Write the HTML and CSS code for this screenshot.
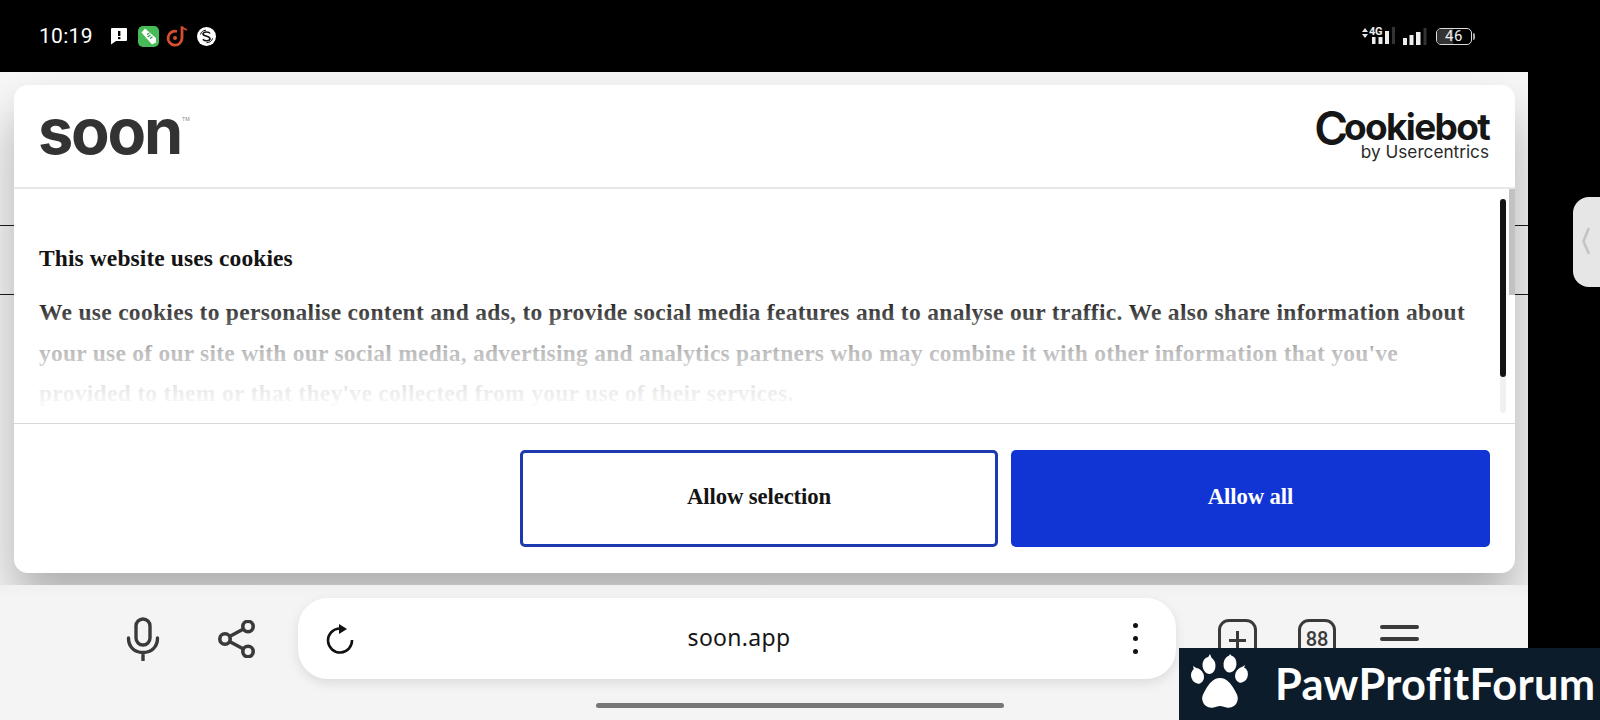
FILE: index.html
```html
<!DOCTYPE html>
<html lang="en">
<head>
<meta charset="utf-8">
<title>soon.app</title>
<link rel="stylesheet" href="styles.css">
</head>
<body>
<header class="status">
  <span class="time">10:19</span>
  <div class="notif">
    <svg class="ic-msg" viewBox="0 0 18 18"><path d="M2 1h14a1 1 0 0 1 1 1v11a1 1 0 0 1-1 1H6l-5 3.500V2a1 1 0 0 1 1-1z" fill="#fff"/><rect x="8" y="4" width="2.400" height="5" fill="#000"/><rect x="8" y="10" width="2.400" height="2.200" fill="#000"/></svg>
    <svg class="ic-app" viewBox="0 0 21 21"><rect width="21" height="21" rx="5" fill="#47bb58"/><path d="M3.500 6.500 7 2.500l11 9.500v4.500l-4 2z" fill="#fff"/><path d="M9 8.500l2.500-1.500M9.500 11l3-2M12 12.500l2.500-1.800" stroke="#2e9a42" stroke-width="1.300" fill="none"/></svg>
    <svg class="ic-note" viewBox="0 0 22 22"><path d="M12 6.500A7 7 0 1 0 17 13V1.500" fill="none" stroke="#d4502f" stroke-width="2.800"/><circle cx="10" cy="13" r="2" fill="#d4502f"/><path d="M16.500 2l5.500 3" stroke="#d4502f" stroke-width="1.500" fill="none"/></svg>
    <svg class="ic-s" viewBox="0 0 19 19"><circle cx="9.500" cy="9.500" r="9.500" fill="#fff"/><path d="M13 6.500C12 4.500 6.500 4.500 6 6.800c-.5 2.400 7 2 7 5 0 2.400-5.500 2.600-7 .4" fill="none" stroke="#111" stroke-width="1.600"/><path d="M3.500 7.500C4 5 6 3.500 9 3.200M15.500 11.500c-.5 2.500-3 4.200-6 4.200" fill="none" stroke="#111" stroke-width="1"/></svg>
  </div>
  <div class="sys">
    <div class="net">
      <svg class="arrows" viewBox="0 0 6 10" fill="#e8e8e8"><path d="M3 0l3 4H0zM3 10 0 6h6z"/></svg>
      <span class="g">4G</span>
      <svg class="bars-a" viewBox="0 0 24 17"><rect x="0" y="10" width="3.500" height="7" fill="#eee"/><rect x="6.500" y="10" width="4" height="7" fill="#eee"/><rect x="13" y="4" width="4" height="13" fill="#eee"/><rect x="20" y="0" width="3" height="17" fill="#333"/></svg>
    </div>
    <svg class="bars-b" viewBox="0 0 24 17"><rect x="0" y="10" width="4" height="7" fill="#eee"/><rect x="6.500" y="7" width="4" height="10" fill="#eee"/><rect x="13" y="4" width="4.500" height="13" fill="#eee"/><rect x="20.500" y="0" width="3" height="17" fill="#333"/></svg>
    <div class="battery"><span class="level"></span><span class="pct">46</span></div><span class="nub"></span>
  </div>
</header>
<div class="stage">
  <main class="browser">
    <div class="page-band"></div>
    <section class="card">
      <div class="card-head">
        <div class="soon">soon<sup class="tm">TM</sup></div>
        <div class="cookiebot">
          <div class="cb-main"><span class="cb-c">C</span>ookiebot</div>
          <div class="cb-sub">by Usercentrics</div>
        </div>
      </div>
      <div class="card-body">
        <h1 class="title">This website uses cookies</h1>
        <p class="copy">We use cookies to personalise content and ads, to provide social media features and to analyse our traffic. We also share information about<br><span class="tight">your use of our site with our social media, advertising and analytics partners who may combine it with other information that you've</span><br>provided to them or that they've collected from your use of their services.</p>
        <div class="fade"></div>
        <div class="track"><div class="thumb"></div></div>
      </div>
      <div class="card-foot">
        <button class="btn btn-line">Allow selection</button>
        <button class="btn btn-fill">Allow all</button>
      </div>
      <div class="page-scroll"></div>
    </section>
    <nav class="toolbar">
      <svg class="tool mic" viewBox="0 0 34 44" fill="none" stroke="#3a3a3a" stroke-width="3.400" stroke-linecap="round"><rect x="10" y="2" width="14" height="26" rx="7"/><path d="M2.500 21c0 9 6 14.500 14.500 14.500S31.500 30 31.500 21M17 36v7"/></svg>
      <svg class="tool share" viewBox="0 0 38 38" fill="none" stroke="#3a3a3a" stroke-width="3.600"><circle cx="7" cy="19" r="5.200"/><circle cx="30" cy="6.500" r="5.200"/><circle cx="30" cy="31.500" r="5.200"/><path d="M11.500 16.500 25.500 9M11.500 21.500 25.500 29"/></svg>
      <div class="url">
        <svg class="reload" viewBox="0 0 28 30" fill="none"><path d="M26 16A12 12 0 1 1 13 4.500" stroke="#111" stroke-width="2.600"/><path d="M13 0l8 5-8 5z" fill="#111"/></svg>
        <span class="url-text">soon.app</span>
        <span class="kebab"><i></i><i></i><i></i></span>
      </div>
      <div class="tabs">
        <span class="boxed plus"></span>
        <span class="boxed count">88</span>
        <span class="menu"><i></i><i></i></span>
      </div>
    </nav>
    <div class="home"></div>
  </main>
  <aside class="side"><div class="handle"><svg viewBox="0 0 10 28" fill="none"><path d="M7.500 2 2.500 14l5 12" stroke="#c4c4c4" stroke-width="2.600" stroke-linecap="round" stroke-linejoin="round"/></svg></div></aside>
</div>
<div class="mark">
  <svg class="paw" viewBox="0 0 60 60" fill="#fff"><ellipse cx="7.500" cy="22" rx="6.300" ry="7.800" transform="rotate(-18 7.500 22)"/><ellipse cx="19" cy="11.500" rx="6.500" ry="8.500" transform="rotate(-6 19 11.500)"/><ellipse cx="40" cy="10" rx="6.500" ry="8.500" transform="rotate(6 40 10)"/><ellipse cx="51.500" cy="21" rx="6.300" ry="7.800" transform="rotate(18 51.500 21)"/><path d="M17 5l3-5 2 5zM38 4l2-4 3 4zM4 16l-1-4 5 3zM49 15l6-4-2 6z"/><path d="M30 24c7 0 11 6 14 11 3 5 4.500 8 3.500 11.500-1 5-6 8-11 7-3-.6-4.500-1.500-6.500-1.500s-3.500.9-6.500 1.500c-5 1-10-2-11-7C11.500 43 13 40 16 35c3-5 7-11 14-11z"/></svg>
  <span class="mark-text">PawProfitForum</span>
</div>
</body>
</html>
```

FILE: styles.css
```css
* { box-sizing: border-box; }
html, body { margin: 0; height: 720px; overflow: hidden; background: #000; }
body { position: relative; display: flex; flex-direction: column; font-family: "Liberation Serif", serif; }

.status { height: 72px; flex: none; display: flex; align-items: center; padding: 0 0 0 39px; color: #fff; font-family: Roboto, sans-serif; }
.time { font-size: 21px; letter-spacing: .3px; width: 71px; }
.notif { display: flex; align-items: center; gap: 9px; }
.ic-msg { width: 18px; height: 18px; margin-right: 1px; }
.ic-app { width: 21px; height: 21px; }
.ic-note { width: 22px; height: 22px; margin-left: -3px; margin-right: 1px; }
.ic-s { width: 19px; height: 19px; }
.sys { margin-left: auto; margin-right: 125px; display: flex; align-items: center; }
.net { position: relative; width: 41px; height: 18px; }
.arrows { position: absolute; left: 0; top: 1px; width: 6px; height: 10px; }
.g { position: absolute; left: 7px; top: -1px; font-size: 11px; line-height: 12px; font-weight: 700; letter-spacing: -.3px; color: #eee; }
.bars-a { position: absolute; left: 10px; top: 0; width: 24px; height: 17px; }
.bars-b { width: 24px; height: 17px; flex: none; }
.battery { position: relative; width: 36px; height: 17px; margin-left: 9px; border: 1.500px solid #ddd; border-radius: 5px; overflow: hidden; display: flex; align-items: center; justify-content: center; }
.level { position: absolute; left: 0; top: 0; bottom: 0; width: 46%; background: #333; }
.pct { position: relative; font-size: 15px; letter-spacing: .6px; color: #eee; }
.nub { width: 2px; height: 7px; background: #aaa; border-radius: 0 2px 2px 0; margin-left: 1px; }

.stage { flex: 1; display: flex; min-height: 0; }
.browser { position: relative; width: 1528px; flex: none; background: #f7f7f7; display: flex; flex-direction: column; overflow: hidden; }
.side { flex: 1; background: #000; padding: 125px 0 0 45px; }
.handle { width: 27px; height: 90px; background: #e6e6e6; border-radius: 16px 0 0 16px; padding: 30px 0 0 8px; }
.handle svg { width: 10px; height: 28px; display: block; }

.page-band { position: absolute; left: 0; right: 0; top: 153px; height: 70px; border-top: 1px solid #1c1c1c; border-bottom: 1px solid #1c1c1c; }

.card { position: relative; margin: 13px 13px 0 14px; height: 488px; flex: none; background: #fff; border-radius: 14px; box-shadow: 0 30px 50px 0 rgba(0,0,0,.3); display: flex; flex-direction: column; }
.card-head { height: 104px; flex: none; padding: 0 26px 0 24px; border-bottom: 2px solid #e8e8e8; display: flex; justify-content: space-between; }
.soon { font-family: Inter, sans-serif; font-weight: 700; font-size: 63px; line-height: 60px; letter-spacing: -2.200px; color: #333; margin-top: 16px; position: relative; height: 60px; }
.tm { position: absolute; left: 144px; top: -12px; font-size: 5px; line-height: 60px; font-weight: 400; letter-spacing: 0; color: #888; }
.cookiebot { font-family: Inter, sans-serif; color: #161616; text-align: right; margin-top: 27px; }
.cb-main { font-size: 37px; line-height: 30px; font-weight: 700; letter-spacing: -1.700px; }
.cb-c { font-size: 46px; font-weight: 600; letter-spacing: -4px; vertical-align: -5px; }
.cb-sub { font-size: 17.200px; line-height: 18px; font-weight: 400; margin-top: 0; color: #2a2a2a; }

.card-body { position: relative; height: 234px; flex: none; padding: 55px 25px 0; }
.title { margin: 0; font-size: 23.500px; line-height: 28px; font-weight: 700; color: #141414; letter-spacing: .1px; }
.copy { margin: 20px 0 0; font-size: 23.500px; line-height: 40.500px; font-weight: 700; color: #141414; letter-spacing: .3px; white-space: nowrap; }
.tight { letter-spacing: .25px; }
.fade { position: absolute; left: 0; right: 30px; top: 108px; height: 126px; background: linear-gradient(180deg, rgba(255,255,255,0) 0, rgba(255,255,255,.2) 16px, rgba(255,255,255,.73) 56px, rgba(255,255,255,.93) 97px, #fff 115px); }
.track { position: absolute; left: 1486px; top: 10px; width: 6px; height: 214px; border-radius: 3px; background: #f0f0f0; }
.thumb { width: 6px; height: 178px; border-radius: 3px; background: #141414; }
.page-scroll { position: absolute; left: 1495px; top: 104px; width: 6px; height: 106px; background: #c2c2c2; }

.card-foot { flex: 1; border-top: 1px solid #d8d8d8; padding: 26px 25px 26px 506px; display: grid; grid-template-columns: 478px 1fr; gap: 13px; }
.btn { font-family: "Liberation Serif", serif; font-size: 22.700px; font-weight: 700; border-radius: 5px; cursor: pointer; letter-spacing: -.1px; padding: 0 0 3px; }
.btn-line { background: #fff; color: #141414; border: 3px solid #1c39b0; }
.btn-fill { background: #1135d4; color: #fff; border: 0; }

.toolbar { position: relative; margin-top: 12px; height: 135px; flex: none; background: linear-gradient(180deg, #f0f0f0 0, #f4f4f4 12px); display: flex; align-items: flex-start; padding-top: 13px; z-index: 1; }
.tool { flex: none; }
.mic { width: 34px; height: 44px; margin: 19px 0 0 126px; }
.share { width: 38px; height: 38px; margin: 22px 0 0 58px; }
.url { margin-left: 42px; width: 878px; height: 81px; background: #fff; border-radius: 30px; box-shadow: 0 4px 12px rgba(0,0,0,.1); display: flex; align-items: center; padding: 0 38px 0 27px; }
.reload { width: 28px; height: 30px; flex: none; margin-left: 1px; margin-right: -1px; }
.url-text { flex: 1; text-align: center; font-family: "Noto Sans", sans-serif; font-size: 23px; color: #161616; padding-right: 8px; letter-spacing: .3px; margin-top: -3px; }
.kebab { display: flex; flex-direction: column; gap: 8px; margin-top: -1px; }
.kebab i { display: block; width: 5px; height: 5px; border-radius: 50%; background: #111; }
.tabs { display: flex; align-items: flex-start; margin: 21px 0 0 42px; gap: 41px; }
.boxed { display: block; width: 39px; height: 42px; border: 3px solid #3a3a3a; border-radius: 11px; position: relative; flex: none; }
.count { width: 38px; font: 500 20px/34px Roboto, sans-serif; color: #3a3a3a; text-align: center; }
.plus::before, .plus::after { content: ""; position: absolute; background: #3a3a3a; }
.plus::before { left: 8px; right: 8px; top: 17px; height: 3px; }
.plus::after { top: 9px; bottom: 0; left: 15px; width: 3px; }
.menu { display: flex; flex-direction: column; gap: 8px; margin: 6px 0 0 3px; }
.menu i { display: block; width: 39px; height: 4px; border-radius: 2px; background: #3a3a3a; }
.home { position: absolute; left: 596px; top: 631px; width: 408px; height: 5px; border-radius: 3px; background: #777; z-index: 2; }

.mark { position: absolute; left: 1179px; top: 648px; width: 421px; height: 72px; background: #0c1c2a; display: flex; align-items: center; z-index: 3; padding-left: 11px; }
.paw { width: 60px; height: 60px; flex: none; margin-top: 0; }
.mark-text { margin-left: 25px; margin-top: -3px; font-family: Lato, sans-serif; font-weight: 700; font-size: 43.400px; letter-spacing: .3px; color: #fff; line-height: 72px; }
```
